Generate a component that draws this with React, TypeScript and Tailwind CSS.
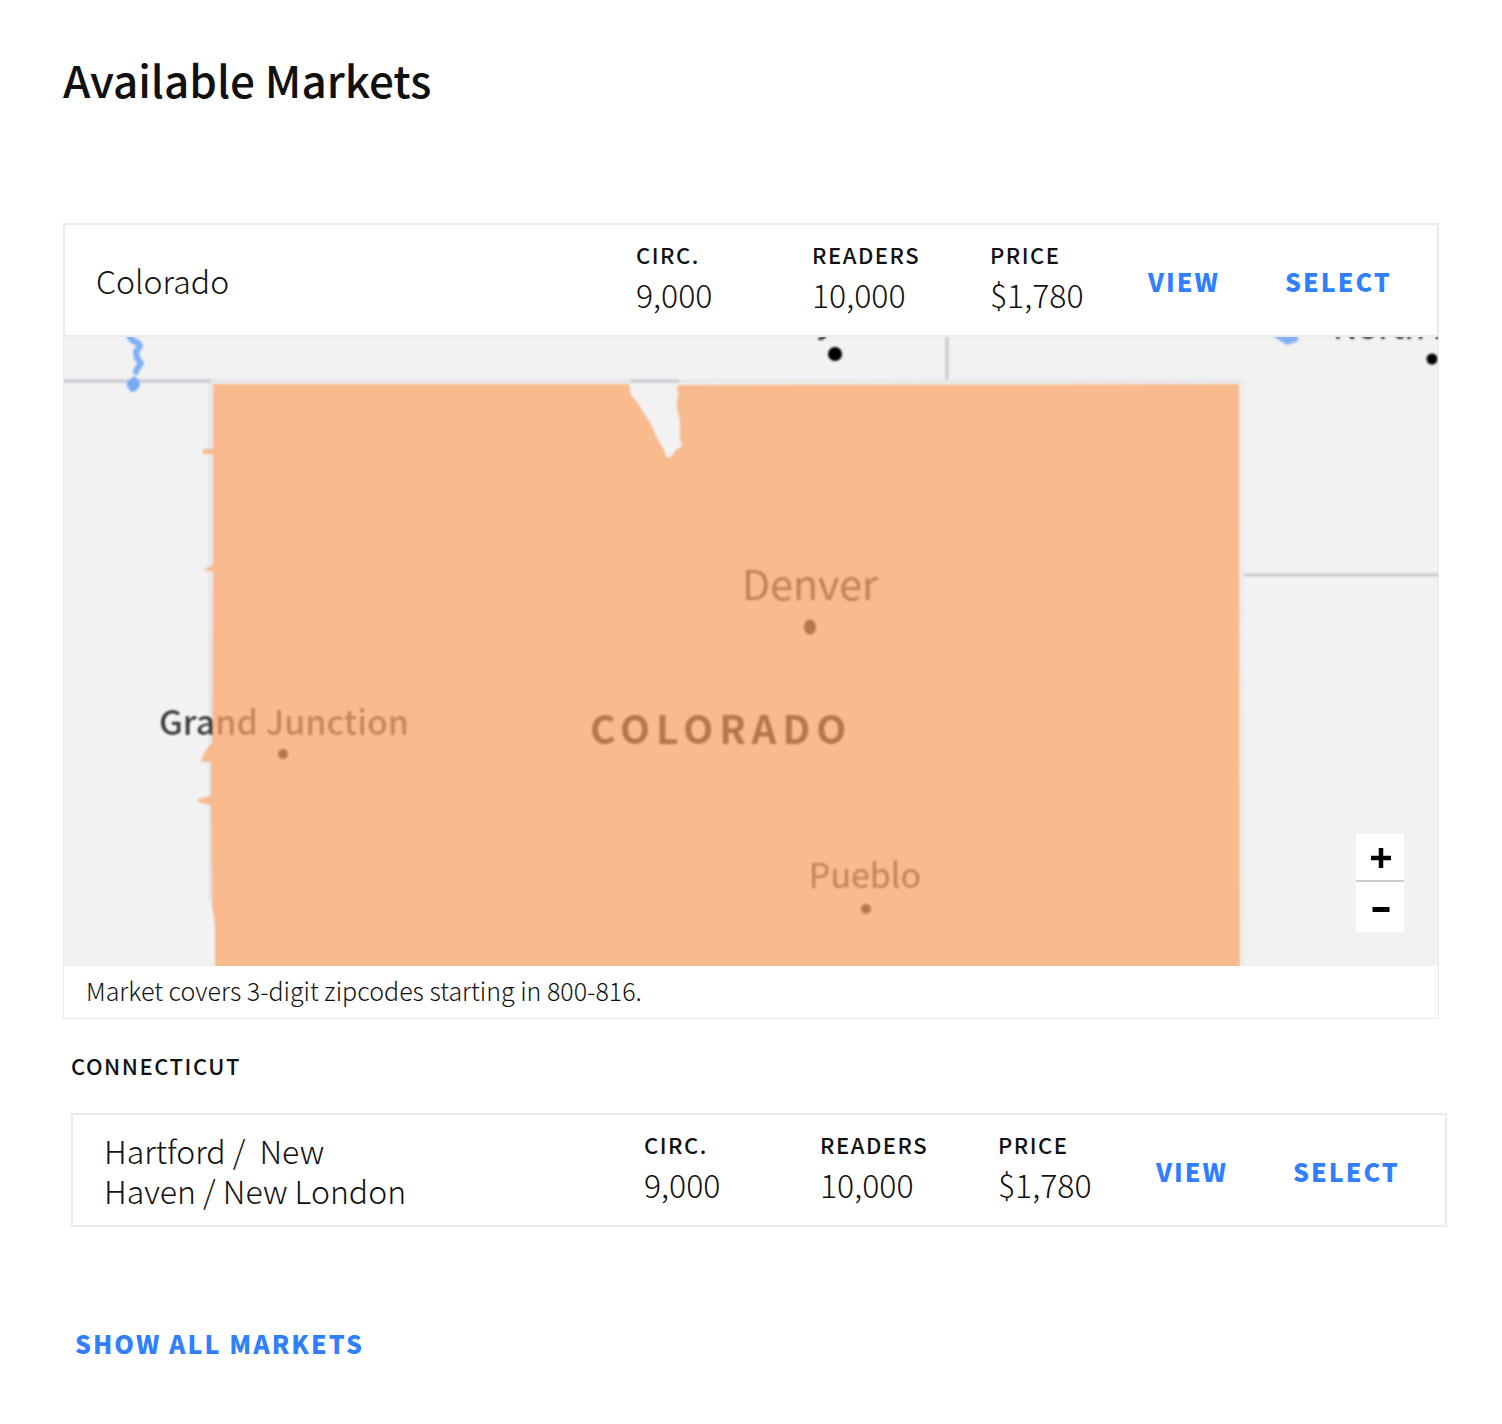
type Market = {
  name: string;
  circ: string;
  readers: string;
  price: string;
};

const colorado: Market = {
  name: "Colorado",
  circ: "9,000",
  readers: "10,000",
  price: "$1,780",
};

const hartford: Market = {
  name: "Hartford /\u00a0 New Haven / New London",
  circ: "9,000",
  readers: "10,000",
  price: "$1,780",
};

function Stat({ label, value }: { label: string; value: string }) {
  return (
    <div>
      <dt className="text-[22px] leading-6 font-medium tracking-[0.07em] uppercase">{label}</dt>
      <dd className="mt-2 text-[32px] leading-10 font-light">{value}</dd>
    </div>
  );
}

function ActionLink({ children }: { children: string }) {
  return (
    <a
      href="#"
      className="text-[25px] leading-8 font-black tracking-[2px] text-[#307fff] uppercase"
    >
      {children}
    </a>
  );
}

function MarketRow({ market }: { market: Market }) {
  return (
    <div className="grid min-h-[114px] grid-cols-[minmax(0,1fr)_512px_289px] items-center border-2 border-[#ebebeb] bg-white pl-[31px]">
      <h3 className="max-w-[310px] text-[32px] leading-10 font-light">{market.name}</h3>
      <dl className="grid grid-cols-[176px_178px_158px] pb-1">
        <Stat label="Circ." value={market.circ} />
        <Stat label="Readers" value={market.readers} />
        <Stat label="Price" value={market.price} />
      </dl>
      <div className="grid grid-cols-[137px_152px] pt-0.5">
        <ActionLink>View</ActionLink>
        <ActionLink>Select</ActionLink>
      </div>
    </div>
  );
}

function MarketMap() {
  return (
    <svg
      viewBox="64 337 1374 629"
      className="block h-auto w-full bg-[#f2f2f2] font-['Noto_Sans_CJK_SC',sans-serif]"
      role="img"
      aria-label="Map of the Colorado market"
    >
      <defs>
        <filter
          id="soften"
          x="-5%"
          y="-5%"
          width="110%"
          height="110%"
          colorInterpolationFilters="sRGB"
        >
          <feGaussianBlur stdDeviation="0.8" />
        </filter>
      </defs>
      <g filter="url(#soften)">
        <g fill="none" stroke="#c6c5d1" strokeWidth="3">
          <path d="M55 381H211" />
          <path d="M630 381H679" />
          <path d="M947 330V380" />
          <path d="M1243 575H1445" />
        </g>
        <g fill="none" stroke="#e4e4ea" strokeWidth="3">
          <path d="M211 381H630M679 381H1243" />
          <path d="M210 383V900" />
        </g>
        <path d="M1243 381V970" fill="none" stroke="#eaeaec" strokeWidth="2" />
        <path
          d="M128 334L132 340L138 343L140 346L136 352L137 358L141 363L137 369L136 372"
          fill="none"
          stroke="#7fb0f6"
          strokeLinecap="round"
          strokeLinejoin="round"
          strokeWidth="6"
        />
        <path
          d="M134 376L139 380L140 386L136 391L131 392L127 386L127 382Z"
          fill="#7aabf2"
        />
        <path d="M1266 332H1298V341L1287 345Z" fill="#82b1f5" />
        <g fill="#000000">
          <circle cx="835" cy="354" r="7" />
          <circle cx="1432" cy="359" r="5.5" />
          <ellipse cx="810" cy="627" rx="6" ry="7.5" />
          <circle cx="283" cy="754" r="5" />
          <circle cx="866" cy="909" r="5" />
        </g>
        <g fill="#242424">
          <text x="835" y="332" fontSize="35" textAnchor="middle">
            Cheyenne
          </text>
          <text x="1333" y="339" fontSize="34">
            North Platte
          </text>
          <text x="810" y="600" fontSize="41" textAnchor="middle">
            Denver
          </text>
          <text
            x="284"
            y="735"
            fontSize="34"
            fontWeight="500"
            textAnchor="middle"
            fill="#383838"
            stroke="#ffffff"
            strokeWidth="3"
            paintOrder="stroke"
          >
            Grand Junction
          </text>
          <text x="865" y="888" fontSize="34" textAnchor="middle">
            Pueblo
          </text>
        </g>
        <text x="590" y="744" fontSize="39" fontWeight="700" fill="#000000" letterSpacing="6">
          COLORADO
        </text>
        <path
          d="M213 384L629 384L631 395L637 402L643 412L651 424L656 436L663 448L667 458L671 457L676 450L682 446L680 438L680 420L677 408L677 400L679 393L677 391L678 385L1239 384L1240 980L215 980L215 925L212 905L211 805L198 802L198 799L211 796L211 762L201 762L204 753L209 746L212 744L213 571L203 570L213 565V454L203 454V449H213Z"
          fill="#fba366"
          fillOpacity="0.72"
        />
      </g>
    </svg>
  );
}

export default function App() {
  return (
    <main className="min-h-screen bg-white px-[63px] pt-12 pb-14 font-['Noto_Sans_CJK_SC',sans-serif] text-[#111111]">
      <h1 className="text-[44px] leading-[62px] font-medium">Available Markets</h1>

      <section className="mt-[113px]">
        <MarketRow market={colorado} />
        <div className="border border-t-0 border-[#ebebeb]">
          <div className="relative">
            <MarketMap />
            <div className="absolute right-[34px] bottom-[34px] flex w-12 flex-col bg-white text-black">
              <button
                type="button"
                aria-label="Zoom in"
                className="flex h-12 items-center justify-center border-b-2 border-[#cccccc]"
              >
                <svg viewBox="0 0 20 20" className="mt-0.5 ml-0.5 size-5" aria-hidden="true">
                  <path d="M0 10H20M10 0V20" stroke="currentColor" strokeWidth="4.5" />
                </svg>
              </button>
              <button
                type="button"
                aria-label="Zoom out"
                className="flex h-[50px] items-center justify-center"
              >
                <svg viewBox="0 0 20 20" className="mt-1.5 ml-0.5 size-5" aria-hidden="true">
                  <path d="M1.5 9.5H18.5" stroke="currentColor" strokeWidth="5" />
                </svg>
              </button>
            </div>
          </div>
          <p className="px-[22px] pt-1.5 pb-2.5 text-[25px] leading-9 font-light">
            Market covers 3-digit zipcodes starting in 800-816.
          </p>
        </div>
      </section>

      <section className="-mr-2 ml-2 pt-[34px]">
        <h2 className="text-[22px] leading-6 font-medium tracking-[0.07em] uppercase">
          Connecticut
        </h2>
        <div className="mt-9">
          <MarketRow market={hartford} />
        </div>
      </section>

      <div className="mt-[100px] ml-3">
        <ActionLink>Show all markets</ActionLink>
      </div>
    </main>
  );
}
